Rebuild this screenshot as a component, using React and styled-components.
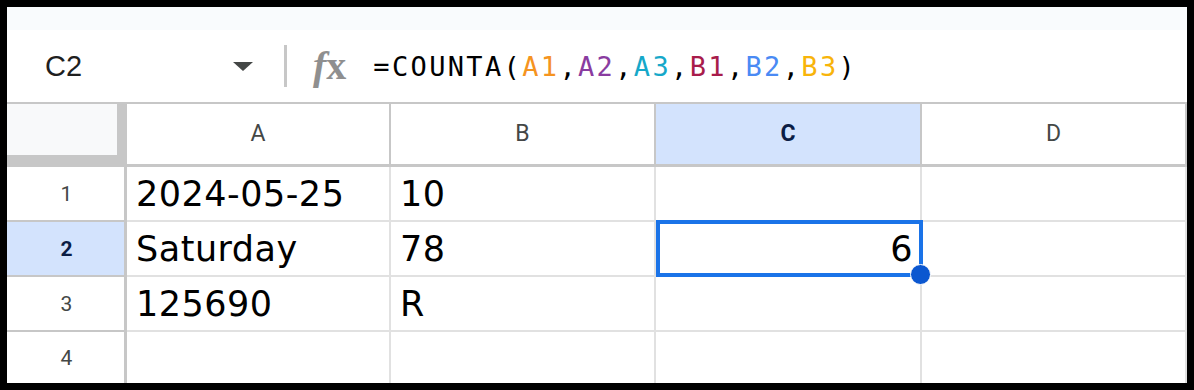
import React from "react";
import styled, { createGlobalStyle } from "styled-components";

const GlobalStyle = createGlobalStyle`
  html, body {
    margin: 0;
    padding: 0;
    background: #ffffff;
  }
  body {
    font-family: Roboto, "Liberation Sans", Arial, sans-serif;
  }
`;

const columns = ["A", "B", "C", "D"];
const columnWidths = [264, 265, 266, 265];

const data = [
  ["2024-05-25", "10", "", ""],
  ["Saturday", "78", "6", ""],
  ["125690", "R", "", ""],
  ["", "", "", ""],
];

const refs = [
  { text: "A1", color: "#f5941f" },
  { text: "A2", color: "#8a3ca0" },
  { text: "A3", color: "#16a8c9" },
  { text: "B1", color: "#a81c4b" },
  { text: "B2", color: "#4a8af4" },
  { text: "B3", color: "#f8b40a" },
];

const activeCol = 2;
const activeRow = 1;

function App() {
  return (
    <>
      <GlobalStyle />
      <Frame>
        <TopStrip />
        <FormulaBar>
          <NameBox>
            <CellName>C2</CellName>
            <Caret />
          </NameBox>
          <Divider />
          <Fx>
            <i>f</i>x
          </Fx>
          <Formula>
            =COUNTA(
            {refs.map((r, i) => (
              <React.Fragment key={r.text}>
                <Ref $color={r.color}>{r.text}</Ref>
                {i < refs.length - 1 ? "," : ""}
              </React.Fragment>
            ))}
            )
          </Formula>
        </FormulaBar>
        <Sheet $widths={columnWidths}>
          <Corner />
          {columns.map((c, i) => (
            <ColHeader key={c} $active={i === activeCol}>
              {c}
            </ColHeader>
          ))}
          {data.map((row, r) => (
            <React.Fragment key={r}>
              <RowHeader $active={r === activeRow} $last={r === data.length - 1}>
                {r + 1}
              </RowHeader>
              {row.map((value, c) => {
                const selected = r === activeRow && c === activeCol;
                const numeric = value !== "" && /^\d+$/.test(value) && selected;
                return (
                  <Cell
                    key={c}
                    $right={numeric}
                    $last={r === data.length - 1}
                  >
                    {value}
                    {selected && (
                      <Selection>
                        <Handle />
                      </Selection>
                    )}
                  </Cell>
                );
              })}
            </React.Fragment>
          ))}
        </Sheet>
      </Frame>
    </>
  );
}

const Frame = styled.div`
  width: 1194px;
  height: 390px;
  box-sizing: border-box;
  border: 7px solid #000000;
  background: #ffffff;
  display: flex;
  flex-direction: column;
  overflow: hidden;
`;

const TopStrip = styled.div`
  height: 23px;
  background: #f9fbfd;
`;

const FormulaBar = styled.div`
  height: 72px;
  border-bottom: 2px solid #c7c7c7;
  display: flex;
  align-items: center;
  padding-left: 38px;
  background: #ffffff;
`;

const NameBox = styled.div`
  width: 208px;
  display: flex;
  align-items: center;
  justify-content: space-between;
`;

const CellName = styled.span`
  font-family: "Liberation Sans", Arial, sans-serif;
  font-size: 29px;
  color: #1f1f1f;
  line-height: 1;
`;

const Caret = styled.span`
  width: 0;
  height: 0;
  border-left: 10px solid transparent;
  border-right: 10px solid transparent;
  border-top: 9px solid #444746;
`;

const Divider = styled.div`
  width: 3px;
  height: 42px;
  margin-left: 31px;
  background: #c7c7c7;
`;

const Fx = styled.span`
  margin-left: 26px;
  font-family: "Liberation Serif", "DejaVu Serif", serif;
  font-size: 40px;
  font-weight: bold;
  color: #8f8f8f;
  line-height: 1;
  letter-spacing: -1px;

  i {
    font-style: italic;
    margin-right: 1px;
  }
`;

const Formula = styled.div`
  margin-left: 28px;
  font-family: "DejaVu Sans Mono", "Liberation Mono", monospace;
  font-size: 27px;
  letter-spacing: 2.35px;
  color: #000000;
  white-space: pre;
`;

const Ref = styled.span`
  color: ${(p) => p.$color};
`;

const Sheet = styled.div`
  flex: 1;
  display: grid;
  grid-template-columns: 120px ${(p) => p.$widths.map((w) => `${w}px`).join(" ")};
  grid-template-rows: 63px 55px 55px 55px 51px;
`;

const Corner = styled.div`
  box-sizing: border-box;
  background: #f8f9fa;
  border-right: 10px solid #c7c7c7;
  border-bottom: 12px solid #c7c7c7;
`;

const ColHeader = styled.div`
  box-sizing: border-box;
  display: flex;
  align-items: center;
  justify-content: center;
  border-right: 2px solid #c7c7c7;
  border-bottom: 3px solid #c7c7c7;
  background: ${(p) => (p.$active ? "#d3e3fd" : "#ffffff")};
  color: ${(p) => (p.$active ? "#0b1d45" : "#444746")};
  font-family: Roboto, "Liberation Sans", Arial, sans-serif;
  font-size: 23px;
  font-weight: ${(p) => (p.$active ? 700 : 400)};
  padding-bottom: 1px;
`;

const RowHeader = styled.div`
  box-sizing: border-box;
  display: flex;
  align-items: center;
  justify-content: center;
  border-right: 3px solid #c7c7c7;
  border-bottom: ${(p) => (p.$last ? "none" : "2px solid #c7c7c7")};
  background: ${(p) => (p.$active ? "#d3e3fd" : "#ffffff")};
  color: ${(p) => (p.$active ? "#0b1d45" : "#444746")};
  font-family: Roboto, "Liberation Sans", Arial, sans-serif;
  font-size: 21px;
  font-weight: ${(p) => (p.$active ? 700 : 400)};
  padding-left: 2px;
`;

const Cell = styled.div`
  position: relative;
  box-sizing: border-box;
  display: flex;
  align-items: center;
  justify-content: ${(p) => (p.$right ? "flex-end" : "flex-start")};
  padding: ${(p) => (p.$right ? "0 7px 0 0" : "0 0 0 9px")};
  border-right: 2px solid #e1e1e1;
  border-bottom: ${(p) => (p.$last ? "none" : "2px solid #e1e1e1")};
  font-family: "DejaVu Sans", Verdana, sans-serif;
  font-size: 35px;
  letter-spacing: 0.5px;
  color: #000000;
  white-space: nowrap;
`;

const Selection = styled.div`
  position: absolute;
  top: -2px;
  left: 0;
  right: -3px;
  bottom: -2px;
  border: 4px solid #1a73e8;
  box-sizing: border-box;
  z-index: 2;
`;

const Handle = styled.div`
  position: absolute;
  right: -12px;
  bottom: -12px;
  width: 19px;
  height: 19px;
  border-radius: 50%;
  background: #0b57d0;
  border: 1.5px solid #ffffff;
`;

export default App;
